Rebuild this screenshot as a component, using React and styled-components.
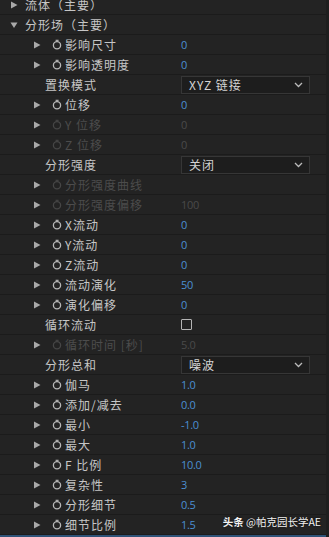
import React from "react";
import styled, { createGlobalStyle } from "styled-components";

const GlobalStyle = createGlobalStyle`
  html, body {
    margin: 0;
    padding: 0;
    background: #232323;
    overflow: hidden;
  }
  body {
    font-family: "Noto Sans CJK SC", "Noto Sans", sans-serif;
  }
`;

const rows = [
  { level: 0, arrow: "right", label: "流体（主要）" },
  { level: 0, arrow: "down", label: "分形场（主要）" },
  { level: 1, arrow: "right", watch: true, label: "影响尺寸", value: "0" },
  { level: 1, arrow: "right", watch: true, label: "影响透明度", value: "0" },
  { level: 1, label: "置换模式", select: "XYZ 链接" },
  { level: 1, arrow: "right", watch: true, label: "位移", value: "0" },
  { level: 1, arrow: "right", watch: true, label: "Y 位移", value: "0", dim: true },
  { level: 1, arrow: "right", watch: true, label: "Z 位移", value: "0", dim: true },
  { level: 1, label: "分形强度", select: "关闭" },
  { level: 1, arrow: "right", watch: true, label: "分形强度曲线", dim: true },
  { level: 1, arrow: "right", watch: true, label: "分形强度偏移", value: "100", dim: true },
  { level: 1, arrow: "right", watch: true, label: "X流动", value: "0" },
  { level: 1, arrow: "right", watch: true, label: "Y流动", value: "0" },
  { level: 1, arrow: "right", watch: true, label: "Z流动", value: "0" },
  { level: 1, arrow: "right", watch: true, label: "流动演化", value: "50" },
  { level: 1, arrow: "right", watch: true, label: "演化偏移", value: "0" },
  { level: 1, label: "循环流动", checkbox: true },
  { level: 1, arrow: "right", watch: true, label: "循环时间 [秒]", value: "5.0", dim: true },
  { level: 1, label: "分形总和", select: "噪波" },
  { level: 1, arrow: "right", watch: true, label: "伽马", value: "1.0" },
  { level: 1, arrow: "right", watch: true, label: "添加/减去", value: "0.0" },
  { level: 1, arrow: "right", watch: true, label: "最小", value: "-1.0" },
  { level: 1, arrow: "right", watch: true, label: "最大", value: "1.0" },
  { level: 1, arrow: "right", watch: true, label: "F 比例", value: "10.0" },
  { level: 1, arrow: "right", watch: true, label: "复杂性", value: "3" },
  { level: 1, arrow: "right", watch: true, label: "分形细节", value: "0.5" },
  { level: 1, arrow: "right", watch: true, label: "细节比例", value: "1.5" },
];

function Stopwatch({ dim }) {
  const c = dim ? "#464646" : "#b8b8b8";
  return (
    <svg width="10" height="11" viewBox="0 0 10 11">
      <circle cx="5" cy="6.3" r="3.6" fill="none" stroke={c} strokeWidth="1.3" />
      <line x1="3.6" y1="1.3" x2="6.6" y2="1.3" stroke={c} strokeWidth="1.1" />
      <line x1="5" y1="1.3" x2="5" y2="2.7" stroke={c} strokeWidth="1.1" />
    </svg>
  );
}

function Arrow({ dir }) {
  return (
    <svg width="8" height="8" viewBox="0 0 8 8">
      {dir === "down" ? (
        <polygon points="0.5,1.5 7.5,1.5 4,7" fill="#a9a9a9" />
      ) : (
        <polygon points="1,0.5 7.5,4 1,7.5" fill="#a9a9a9" />
      )}
    </svg>
  );
}

function App() {
  return (
    <>
      <GlobalStyle />
      <Panel>
        <List>
          {rows.map((r, i) => (
            <Row key={i}>
              <Name level={r.level} noArrow={!r.arrow}>
                {r.arrow && (
                  <ArrowBox>
                    <Arrow dir={r.arrow} />
                  </ArrowBox>
                )}
                {r.watch && (
                  <WatchBox>
                    <Stopwatch dim={r.dim} />
                  </WatchBox>
                )}
                <Label dim={r.dim}>{r.label}</Label>
              </Name>
              <Control>
                {r.value && <Value dim={r.dim}>{r.value}</Value>}
                {r.select && (
                  <Select>
                    <span>{r.select}</span>
                    <svg width="9" height="6" viewBox="0 0 9 6">
                      <polyline points="1,1 4.5,4.5 8,1" fill="none" stroke="#bbb" strokeWidth="1.3" />
                    </svg>
                  </Select>
                )}
                {r.checkbox && <Check />}
              </Control>
            </Row>
          ))}
        </List>
        <BottomBar />
        <ScrollEdge />
        <Watermark>
          <b>头条</b> @帕克园长学AE
        </Watermark>
      </Panel>
    </>
  );
}

const Panel = styled.div`
  position: relative;
  width: 329px;
  height: 537px;
  overflow: hidden;
  background: #232323;
  display: flex;
  flex-direction: column;
`;

const List = styled.div`
  margin-top: -5px;
  display: flex;
  flex-direction: column;
`;

const Row = styled.div`
  height: 20px;
  flex: 0 0 20px;
  display: flex;
  align-items: center;
  border-bottom: 1px solid #1b1b1b;
  box-sizing: border-box;
  font-size: 12px;
`;

const Name = styled.div`
  flex: 0 0 180px;
  display: flex;
  align-items: center;
  padding-left: ${(p) => (p.level === 0 ? 10 : p.noArrow ? 45 : 33)}px;
  box-sizing: border-box;
  overflow: hidden;
`;

const ArrowBox = styled.span`
  width: 15px;
  flex: 0 0 15px;
  display: flex;
  align-items: center;
`;

const WatchBox = styled.span`
  flex: 0 0 13px;
  margin-left: 4px;
  display: flex;
  align-items: center;
`;

const Label = styled.span`
  color: ${(p) => (p.dim ? "#4c4c4c" : "#c6c6c6")};
  white-space: nowrap;
  letter-spacing: 1px;
`;

const Control = styled.div`
  flex: 1;
  display: flex;
  align-items: center;
  padding-left: 1px;
`;

const Value = styled.span`
  color: ${(p) => (p.dim ? "#4a4a4a" : "#4b8fd2")};
  font-family: "Open Sans", "Liberation Sans", sans-serif;
  font-size: 11px;
  letter-spacing: -0.3px;
`;

const Select = styled.div`
  width: 129px;
  height: 18px;
  box-sizing: border-box;
  background: #1d1d1d;
  border: 1px solid #363636;
  display: flex;
  align-items: center;
  justify-content: space-between;
  padding: 0 6px 0 7px;
  color: #d4d4d4;
  font-size: 12px;
  letter-spacing: 1px;
`;

const Check = styled.div`
  width: 9px;
  height: 9px;
  border: 1.5px solid #b5b5b5;
  border-radius: 1px;
`;

const BottomBar = styled.div`
  height: 2px;
  background: #2f5378;
`;

const ScrollEdge = styled.div`
  position: absolute;
  right: 0;
  top: 0;
  bottom: 0;
  width: 3px;
  background: #1e1e1e;
`;

const Watermark = styled.div`
  position: absolute;
  right: 8px;
  bottom: 8px;
  color: #f2f2f2;
  font-size: 10.5px;
  text-shadow: 0 0 2px rgba(0, 0, 0, 0.8);
  b {
    font-weight: 700;
  }
`;

export default App;
